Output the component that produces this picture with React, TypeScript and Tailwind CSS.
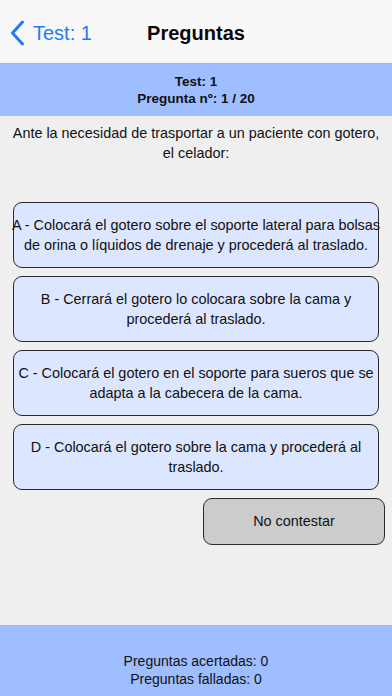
export default function App() {
    const options = [
        ["A - Colocará el gotero sobre el soporte lateral para bolsas", "de orina o líquidos de drenaje y procederá al traslado."],
        ["B - Cerrará el gotero lo colocara sobre la cama y", "procederá al traslado."],
        ["C - Colocará el gotero en el soporte para sueros que se", "adapta a la cabecera de la cama."],
        ["D - Colocará el gotero sobre la cama y procederá al", "traslado."],
    ];
    return (
        <div className="w-[392px] h-[696px] flex flex-col bg-[#efefef] text-[#111] font-['Liberation_Sans',Arial,sans-serif] overflow-hidden">
            <div className="h-[64px] shrink-0 bg-[#f7f7f8] border-b border-b-[#b5b5b8] relative flex items-center justify-center pt-[2px]">
                <div className="absolute left-[10px] top-[20px] flex items-center gap-[8px] text-[#1f7cf2]">
                    <svg width="15" height="26" viewBox="0 0 15 26" fill="none">
                        <path d="M12.5 2 L2.5 13 L12.5 24" stroke="#1f7cf2" strokeWidth="3" strokeLinecap="round" strokeLinejoin="round" />
                    </svg>
                    <span className="text-[20px] leading-none">Test: 1</span>
                </div>
                <h1 className="text-[20px] font-bold text-[#0a0a0a]">Preguntas</h1>
            </div>
            <div className="h-[52px] shrink-0 bg-[#9ebeff] flex flex-col items-center justify-center text-[13.5px] leading-[17px] font-bold text-[#111]">
                <p>Test: 1</p>
                <p>Pregunta nº: 1 / 20</p>
            </div>
            <p className="mt-[7px] text-center text-[14.4px] leading-[20px] whitespace-nowrap">
                Ante la necesidad de trasportar a un paciente con gotero,<br />el celador:
            </p>
            <ul className="mt-[39px] flex flex-col gap-[8px] px-[13px]">
                {options.map((o) => (
                    <li
                        key={o[0]}
                        className="h-[66px] rounded-[9px] border border-[#2b2b2b] bg-[#dde6ff] flex flex-col items-center justify-center text-[14.4px] leading-[20px]"
                    >
                        <span className="whitespace-nowrap">{o[0]}</span>
                        <span className="whitespace-nowrap">{o[1]}</span>
                    </li>
                ))}
            </ul>
            <div className="mt-[8px] flex justify-end pr-[7px]">
                <button className="w-[182px] h-[47px] rounded-[9px] border border-[#2b2b2b] bg-[#cccccc] text-[14.4px]">
                    No contestar
                </button>
            </div>
            <div className="flex-1" />
            <div className="h-[71px] shrink-0 bg-[#9ebeff] flex flex-col items-center justify-end pb-[8px] text-[14px] leading-[18px]">
                <p>Preguntas acertadas: 0</p>
                <p>Preguntas falladas: 0</p>
            </div>
        </div>
    );
}
